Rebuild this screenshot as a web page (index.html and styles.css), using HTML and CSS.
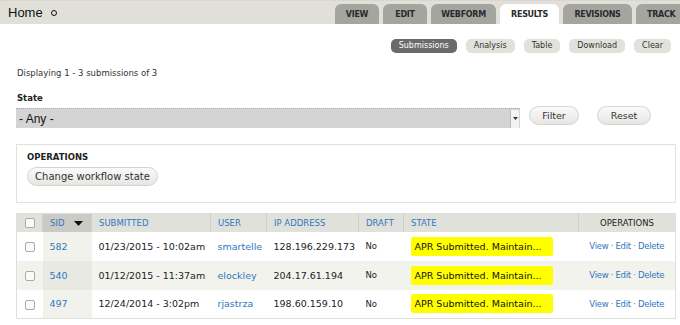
FILE: index.html
```html
<!DOCTYPE html>
<html>
<head>
<meta charset="utf-8">
<link rel="stylesheet" href="styles.css">
</head>
<body>
<header class="topbar">
  <div class="title"><span class="home">Home</span><span class="ring"></span></div>
  <ul class="tabs">
    <li class="tab">VIEW</li>
    <li class="tab">EDIT</li>
    <li class="tab">WEBFORM</li>
    <li class="tab active">RESULTS</li>
    <li class="tab">REVISIONS</li>
    <li class="tab last">TRACK</li>
  </ul>
</header>
<main class="content">
  <nav class="subtabs">
    <span class="pill current">Submissions</span>
    <span class="pill">Analysis</span>
    <span class="pill">Table</span>
    <span class="pill">Download</span>
    <span class="pill">Clear</span>
  </nav>
  <p class="summary">Displaying 1 - 3 submissions of 3</p>
  <div class="label">State</div>
  <div class="filter-row">
    <div class="select"><span>- Any -</span><span class="arrow"><svg width="5" height="4" viewBox="0 0 5 4"><path d="M0 0h5L2.5 3z" fill="#333"/></svg></span></div>
    <button class="btn btn-filter">Filter</button>
    <button class="btn btn-reset">Reset</button>
  </div>
  <fieldset class="ops">
    <div class="legend">OPERATIONS</div>
    <button class="btn btn-wide">Change workflow state</button>
  </fieldset>
  <table class="grid">
    <thead>
      <tr>
        <th class="c-check"><span class="box"></span></th>
        <th class="c-sid sorted"><span class="hl">SID</span><svg class="sort" width="9" height="5" viewBox="0 0 9 5"><path d="M0 0h9L4.5 5z" fill="#111"/></svg></th>
        <th class="c-sub"><span class="hl">SUBMITTED</span></th>
        <th class="c-user"><span class="hl">USER</span></th>
        <th class="c-ip"><span class="hl">IP ADDRESS</span></th>
        <th class="c-draft"><span class="hl">DRAFT</span></th>
        <th class="c-state"><span class="hl">STATE</span></th>
        <th class="c-ops">OPERATIONS</th>
      </tr>
    </thead>
    <tbody>
      <tr>
        <td class="c-check"><span class="box"></span></td>
        <td class="c-sid"><a>582</a></td>
        <td>01/23/2015 - 10:02am</td>
        <td><a>smartelle</a></td>
        <td>128.196.229.173</td>
        <td class="small">No</td>
        <td><span class="flag">APR Submitted. Maintain...</span></td>
        <td class="c-ops"><a>View</a> · <a>Edit</a> · <a>Delete</a></td>
      </tr>
      <tr class="even">
        <td class="c-check"><span class="box"></span></td>
        <td class="c-sid"><a>540</a></td>
        <td>01/12/2015 - 11:37am</td>
        <td><a>elockley</a></td>
        <td>204.17.61.194</td>
        <td class="small">No</td>
        <td><span class="flag">APR Submitted. Maintain...</span></td>
        <td class="c-ops"><a>View</a> · <a>Edit</a> · <a>Delete</a></td>
      </tr>
      <tr>
        <td class="c-check"><span class="box"></span></td>
        <td class="c-sid"><a>497</a></td>
        <td>12/24/2014 - 3:02pm</td>
        <td><a>rjastrza</a></td>
        <td>198.60.159.10</td>
        <td class="small">No</td>
        <td><span class="flag">APR Submitted. Maintain...</span></td>
        <td class="c-ops"><a>View</a> · <a>Edit</a> · <a>Delete</a></td>
      </tr>
    </tbody>
  </table>
</main>
</body>
</html>
```
FILE: styles.css
```css
* { box-sizing: border-box; }
html, body { margin: 0; padding: 0; }
body {
  width: 680px;
  height: 325px;
  overflow: hidden;
  background: #fff;
  color: #222;
  font-family: "DejaVu Sans", sans-serif;
  font-size: 10px;
}
.topbar {
  display: flex;
  align-items: flex-end;
  height: 24px;
  background: #e0e0d9;
  border-top: 1px dotted #d0d0c8;
  white-space: nowrap;
  overflow: hidden;
}
.title {
  flex: 0 0 335px;
  align-self: stretch;
  display: flex;
  align-items: center;
  padding-left: 8px;
  padding-bottom: 1px;
}
.home { font-family: "Liberation Sans", sans-serif; font-size: 13px; color: #111; }
.ring {
  display: inline-block;
  width: 6px; height: 6px;
  border: 1.5px solid #111;
  border-radius: 50%;
  margin-left: 8px;
  margin-top: 1px;
}
.tabs {
  display: flex;
  gap: 4px;
  margin: 0;
  padding: 0;
  list-style: none;
  flex: 0 0 auto;
}
.tab {
  height: 20px;
  line-height: 21px;
  padding: 0;
  background: #a5a5a0;
  border-radius: 6px 6px 0 0;
  font-size: 8px;
  font-weight: bold;
  letter-spacing: -0.3px;
  color: #2a2a2a;
  text-align: center;
}
.tab:nth-child(1) { width: 44px; }
.tab:nth-child(2) { width: 44px; }
.tab:nth-child(3) { width: 65px; }
.tab:nth-child(4) { width: 59px; }
.tab:nth-child(5) { width: 69px; }
.tab.last { width: 60px; text-align: left; padding-left: 11px; }
.tab.active { background: #fff; }

.content { padding: 0 4px 0 16px; }
.subtabs {
  display: flex;
  justify-content: flex-end;
  gap: 9px;
  margin-top: 15px;
  padding-right: 5px;
}
.pill {
  height: 14px;
  line-height: 14px;
  padding: 0 8px;
  border-radius: 5px;
  background: #e2e2dc;
  color: #333;
  font-size: 8px;
}
.pill.current { background: #6b6b6b; color: #fff; }
.summary { margin: 14px 0 0 1px; font-size: 8.5px; color: #333; line-height: 12px; }
.label { margin: 13px 0 0 1px; font-size: 8.5px; font-weight: bold; line-height: 12px; color: #222; }
.filter-row { display: flex; align-items: center; margin-top: 3px; height: 22px; }
.select {
  width: 504px;
  height: 20px;
  background: #d4d4d4;
  border-top: 1px dotted #aaa;
  display: flex;
  align-items: center;
  justify-content: space-between;
  font-family: "Liberation Sans", sans-serif;
  font-size: 12px;
  color: #111;
  padding-left: 3px;
}
.arrow {
  width: 9px;
  height: 18px;
  background: #f3f3f3;
  border-left: 1px solid #bbb;
  margin-right: 1px;
  display: flex;
  align-items: center;
  justify-content: center;
}
.btn {
  height: 19px;
  border: 1px solid #d4d4ce;
  border-radius: 10px;
  background: linear-gradient(#fafafa, #e6e6e3);
  font-family: "DejaVu Sans", sans-serif;
  font-size: 9.5px;
  color: #333;
  padding: 0;
}
.btn-filter { width: 50px; margin-left: 9px; margin-top: -5px; }
.btn-reset { width: 54px; margin-left: 18px; margin-top: -5px; }
.ops {
  margin: 15px 0 0 0;
  width: 660px;
  height: 59px;
  border: 1px solid #e2e2dc;
  padding: 6px 10px;
}
.legend { font-size: 8.5px; font-weight: bold; color: #222; line-height: 12px; margin-bottom: 4px; }
.btn-wide { width: 131px; font-size: 10px; }

.grid {
  margin-top: 10px;
  width: 660px;
  border-collapse: collapse;
  border: 1px solid #dfdfd9;
  table-layout: fixed;
}
.grid th {
  height: 18px;
  background: #e1e1db;
  border-right: 1px solid #d0d0ca;
  text-align: left;
  padding: 0 7px;
  font-size: 8.5px;
  font-weight: normal;
  color: #2f77c0;
  white-space: nowrap;
}
.grid th.sorted { background: #cbcbc5; }
.grid th .sort { margin-left: 10px; vertical-align: middle; }
.grid td {
  height: 29px;
  padding: 0 7px;
  font-size: 9.5px;
  color: #222;
  white-space: nowrap;
  overflow: hidden;
}
.grid tr.even td { background: #f2f3ed; }
.grid td.c-sid { background: #f2f2ec; }
.grid tr.even td.c-sid { background: #e9e9e3; }
.grid a { color: #2f77c0; }
.grid .c-check { width: 26px; text-align: center; padding: 0; }
.c-sid { width: 49px; }
.c-sub { width: 119px; }
.c-user { width: 56px; }
.c-ip { width: 92px; }
.c-draft { width: 45px; }
.c-state { width: 175px; }
.grid th.c-ops { color: #222; text-align: center; border-right: 0; padding: 0; }
.grid td.c-ops { text-align: center; color: #777; font-size: 8.5px; letter-spacing: -0.3px; padding: 0; }
.small { font-size: 8.5px !important; }
.box {
  display: inline-block;
  width: 10px; height: 10px;
  border: 1px solid #aaa;
  border-radius: 2px;
  background: #fafafa;
  vertical-align: middle;
}
.flag {
  display: inline-block;
  background: #ffff00;
  border-radius: 2px;
  width: 142px;
  height: 19px;
  line-height: 19px;
  padding-left: 4px;
  font-size: 9.5px;
  color: #111;
}
```
